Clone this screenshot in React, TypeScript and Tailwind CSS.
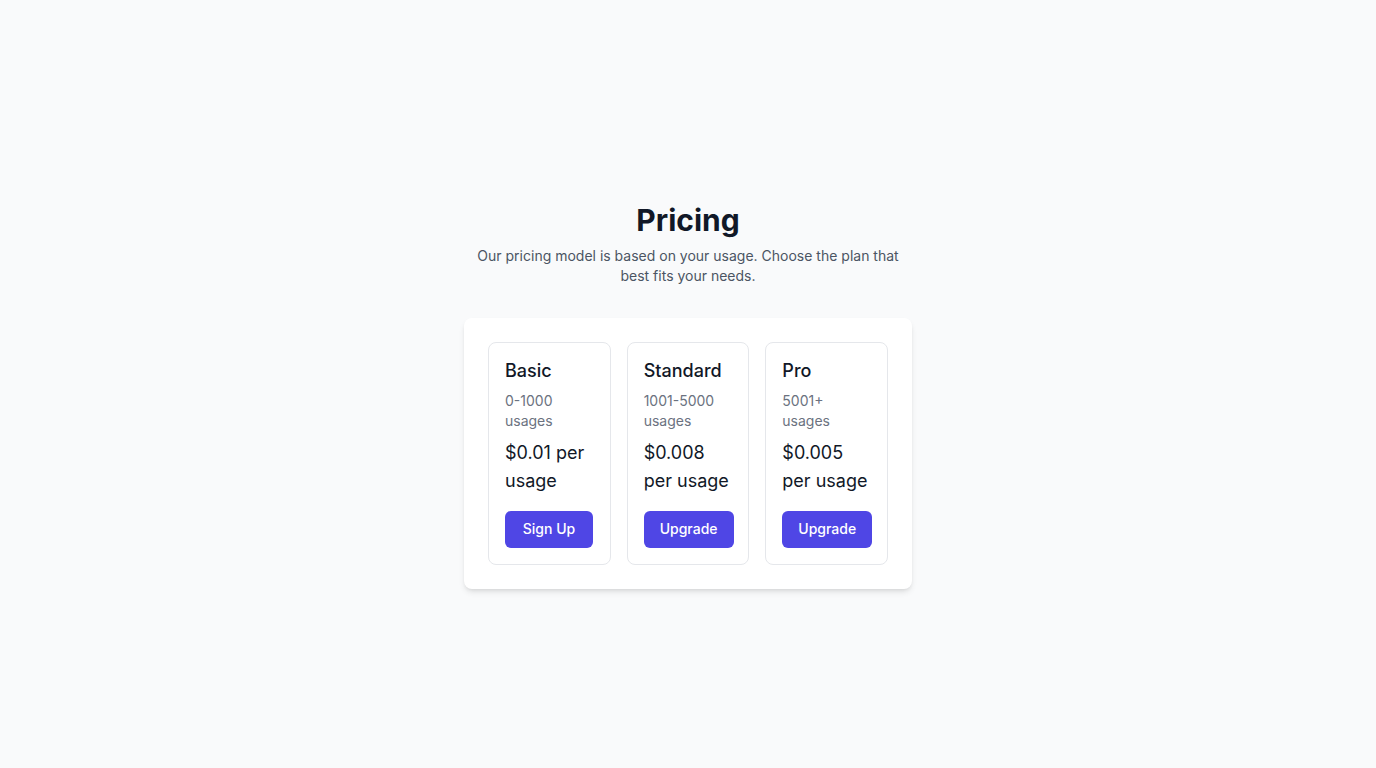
import React from "react";

const plans = [
  { name: "Basic", range: "0-1000 usages", price: "$0.01 per usage", cta: "Sign Up" },
  { name: "Standard", range: "1001-5000 usages", price: "$0.008 per usage", cta: "Upgrade" },
  { name: "Pro", range: "5001+ usages", price: "$0.005 per usage", cta: "Upgrade" },
];

const App = () => {
  return (
    <div
      className="min-h-screen bg-[#f9fafb] flex flex-col items-center justify-center pt-[22px]"
      style={{ fontFamily: "Inter, 'Noto Sans', sans-serif" }}
    >
      <div className="w-full max-w-md flex flex-col items-center">
        <h1 className="text-3xl font-bold text-[#111827]">Pricing</h1>
        <p className="mt-2 text-sm text-[#4b5563] text-center">
          Our pricing model is based on your usage. Choose the plan that best fits your needs.
        </p>
        <div className="mt-8 w-full bg-white rounded-lg shadow-md p-6 grid grid-cols-3 gap-4">
          {plans.map((plan) => (
            <div key={plan.name} className="border border-[#e5e7eb] rounded-lg p-4 flex flex-col items-start">
              <h2 className="text-lg leading-6 font-medium text-[#111827]">{plan.name}</h2>
              <p className="mt-2 text-sm text-[#6b7280]">{plan.range}</p>
              <p className="mt-2 text-lg text-[#111827]">{plan.price}</p>
              <button className="mt-4 h-[37px] min-w-[88px] bg-[#4f46e5] text-white text-sm font-medium px-4 rounded-md">
                {plan.cta}
              </button>
            </div>
          ))}
        </div>
      </div>
    </div>
  );
};

export default App;
